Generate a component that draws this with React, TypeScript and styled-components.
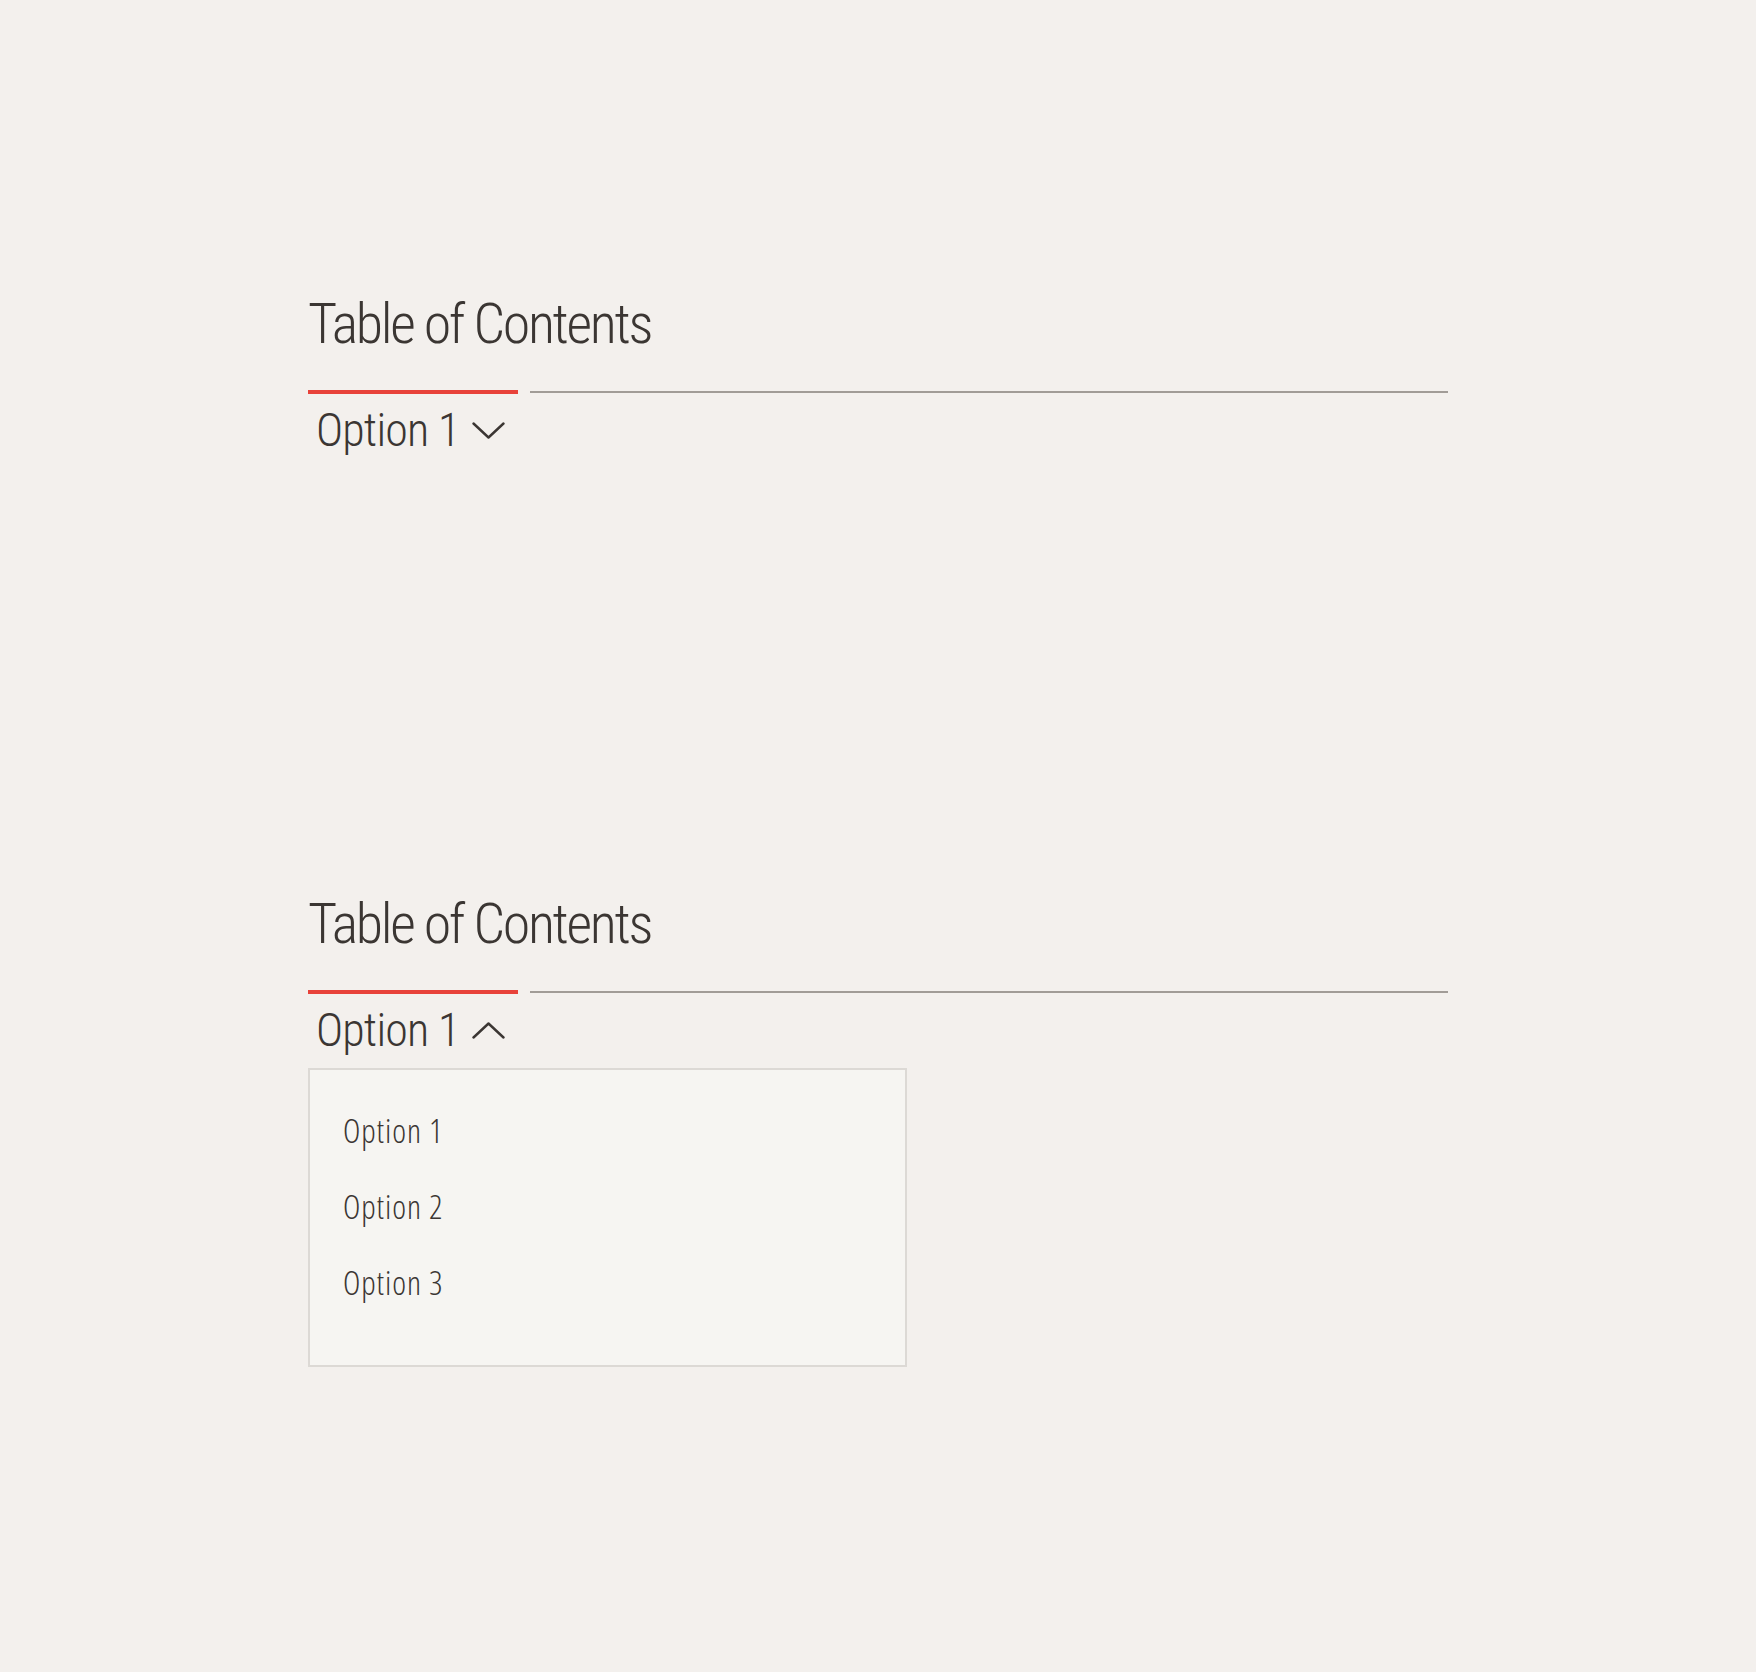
import React from 'react';
import styled, { createGlobalStyle } from 'styled-components';

const GlobalStyle = createGlobalStyle`
  body {
    margin: 0;
    background: #f3f0ed;
    color: #3b3633;
    font-family: Roboto, sans-serif;
    font-stretch: 75%;
  }
`;

const Page = styled.div`
  display: flex;
  flex-direction: column;
  gap: 443px;
  padding: 296px 0 200px 308px;
`;

const Section = styled.section`
  width: 1140px;
  display: flex;
  flex-direction: column;
  align-items: flex-start;
`;

const Title = styled.h2`
  margin: 0;
  font-family: Roboto, sans-serif;
  font-stretch: 75%;
  font-weight: 300;
  font-size: 56px;
  line-height: 1;
  letter-spacing: -0.042em;
  color: #3b3633;
`;

const TabRail = styled.div`
  margin-top: 38px;
  width: 100%;
  display: flex;
  align-items: center;
  gap: 12px;
`;

const ActiveBar = styled.div`
  width: 210px;
  height: 4px;
  background: #e8423a;
`;

const Track = styled.div`
  flex: 1;
  height: 2px;
  background: #a19c97;
`;

const Toggle = styled.button`
  margin-top: 13px;
  padding: 0 0 0 8px;
  border: 0;
  background: none;
  display: flex;
  align-items: center;
  gap: 13px;
  font-family: Roboto, sans-serif;
  font-stretch: 75%;
  font-weight: 300;
  font-size: 46px;
  line-height: 1;
  letter-spacing: -0.018em;
  color: #3b3633;
  cursor: pointer;
`;

const Chevron = styled.svg`
  width: 33px;
  height: 17px;
  flex: none;
`;

const Menu = styled.ul`
  margin: 15px 0 0;
  padding: 23px 0 44px 33px;
  list-style: none;
  width: 599px;
  box-sizing: border-box;
  background: #f6f5f2;
  border: 2px solid #dcd9d5;
`;

const MenuItem = styled.li`
  font-family: "Open Sans", sans-serif;
  font-stretch: 75%;
  font-weight: 300;
  font-size: 33px;
  line-height: 76px;
  letter-spacing: 0.9px;
  color: #3b3633;
`;

const ChevronIcon = ({ up }: { up?: boolean }) => (
  <Chevron viewBox="0 0 33 17" fill="none" stroke="#3b3633" strokeWidth="2.4" strokeLinecap="round" strokeLinejoin="round">
    {up ? <polyline points="1.5,15.5 16.5,1.5 31.5,15.5" /> : <polyline points="1.5,1.5 16.5,15.5 31.5,1.5" />}
  </Chevron>
);

const options = ['Option 1', 'Option 2', 'Option 3'];

const TableOfContents = ({ open }: { open?: boolean }) => (
  <Section>
    <Title>Table of Contents</Title>
    <TabRail>
      <ActiveBar />
      <Track />
    </TabRail>
    <Toggle>
      Option 1
      <ChevronIcon up={open} />
    </Toggle>
    {open && (
      <Menu>
        {options.map((o) => (
          <MenuItem key={o}>{o}</MenuItem>
        ))}
      </Menu>
    )}
  </Section>
);

export default function App() {
  return (
    <>
      <GlobalStyle />
      <Page>
        <TableOfContents />
        <TableOfContents open />
      </Page>
    </>
  );
}
